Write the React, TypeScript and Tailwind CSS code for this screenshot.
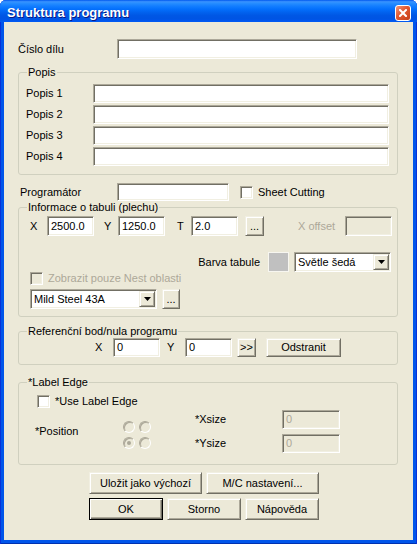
const sunken =
  "border border-t-[#aca899] border-l-[#aca899] border-b-white border-r-white shadow-[inset_1px_1px_#716f64,inset_-1px_-1px_#f1efe2]";
const raised =
  "border border-t-[#f1efe2] border-l-[#f1efe2] border-b-[#716f64] border-r-[#716f64] shadow-[inset_1px_1px_#fff,inset_-1px_-1px_#aca899] bg-[#ece9d8]";

function Field({ className = "", value = "", disabled = false }: { className?: string; value?: string; disabled?: boolean }) {
  return (
    <div
      className={`${sunken} ${disabled ? "bg-[#ece9d8] text-[#aca899]" : "bg-white"} flex shrink-0 items-center pl-[3px] whitespace-nowrap ${className}`}
    >
      {value}
    </div>
  );
}

function Button({ className = "", children, primary = false }: { className?: string; children?: React.ReactNode; primary?: boolean }) {
  if (primary) {
    return (
      <div
        className={`flex shrink-0 items-center justify-center border border-black bg-[#ece9d8] shadow-[inset_1px_1px_#fff,inset_-1px_-1px_#716f64,inset_-2px_-2px_#aca899] ${className}`}
      >
        {children}
      </div>
    );
  }
  return <div className={`${raised} flex shrink-0 items-center justify-center whitespace-nowrap ${className}`}>{children}</div>;
}

function Combo({ className = "", value }: { className?: string; value: string }) {
  return (
    <div className={`${sunken} flex shrink-0 items-center bg-white p-[1px] ${className}`}>
      <span className="flex-1 pl-[2px] whitespace-nowrap">{value}</span>
      <div className={`${raised} flex h-full w-[16px] items-center justify-center`}>
        <svg width="7" height="4" viewBox="0 0 7 4">
          <path d="M0 0h7L3.5 4z" fill="#000" />
        </svg>
      </div>
    </div>
  );
}

function Check({ disabled = false }: { disabled?: boolean }) {
  return <div className={`${sunken} h-[13px] w-[13px] shrink-0 ${disabled ? "bg-[#ece9d8]" : "bg-white"}`} />;
}

function Radio({ checked = false }: { checked?: boolean }) {
  return (
    <div className="flex h-[12px] w-[12px] items-center justify-center rounded-full border border-t-[#aca899] border-l-[#aca899] border-b-white border-r-white bg-[#ece9d8] shadow-[inset_1px_1px_#aca899]">
      {checked && <div className="h-[4px] w-[4px] rounded-full bg-[#aca899]" />}
    </div>
  );
}

function Group({ title, className = "", children }: { title: string; className?: string; children?: React.ReactNode }) {
  return (
    <fieldset className={`w-[380px] rounded-[3px] border border-[#d0d0bf] ${className}`}>
      <legend className="ml-[8px] px-[1px] leading-[13px]">{title}</legend>
      {children}
    </fieldset>
  );
}

export default function App() {
  return (
    <div className="flex h-[544px] w-[417px] flex-col overflow-hidden rounded-t-[6px] bg-[#0055ea] font-['Liberation_Sans',Arial,sans-serif] text-[11px] text-black shadow-[inset_1px_0_#0831d9,inset_-1px_0_#0831d9,inset_0_-1px_#0031b0]">
      {/* title bar */}
      <div className="flex h-[22px] shrink-0 items-center justify-between bg-[linear-gradient(to_bottom,#0058ee_0%,#3a93ff_8%,#288eff_14%,#127dff_28%,#036ffc_42%,#0262ee_56%,#0057e5_70%,#0054e3_85%,#0055eb_92%,#005bf5_100%)] pl-[7px] pr-[6px]">
        <span className="mt-[3px] text-[13px] font-bold text-white [text-shadow:1px_1px_#0a1883]">Struktura programu</span>
        <div className="mt-[3px] flex h-[16px] w-[16px] items-center justify-center rounded-[3px] border border-white bg-[linear-gradient(135deg,#f0967a_0%,#e1572f_45%,#c53f19_100%)]">
          <svg width="8" height="8" viewBox="0 0 8 8">
            <path d="M1 1l6 6M7 1L1 7" stroke="#fff" strokeWidth="2" strokeLinecap="square" />
          </svg>
        </div>
      </div>

      {/* client */}
      <div className="mx-[4px] mb-[4px] flex flex-1 flex-col bg-[#ece9d8] pl-[14px]">
        <div className="mt-[17px] flex h-[20px] items-center">
          <span className="w-[99px]">Číslo dílu</span>
          <Field className="h-[20px] w-[240px]" />
        </div>

        <Group title="Popis" className="mt-[7px] pb-[8px] pt-[5px]">
          <div className="flex flex-col gap-[2px] pl-[7px]">
            {["Popis 1", "Popis 2", "Popis 3", "Popis 4"].map((p) => (
              <div key={p} className="flex h-[19px] items-center">
                <span className="w-[67px]">{p}</span>
                <Field className="h-[19px] w-[296px]" />
              </div>
            ))}
          </div>
        </Group>

        <div className="mt-[8px] flex h-[18px] items-center">
          <span className="ml-[2px] w-[97px]">Programátor</span>
          <Field className="h-[18px] w-[112px]" />
          <div className="ml-[11px]">
            <Check />
          </div>
          <span className="ml-[5px]">Sheet Cutting</span>
        </div>

        <Group title="Informace o tabuli (plechu)" className="pb-[7px] pt-[2px]">
          <div className="flex h-[20px] items-center">
            <span className="ml-[11px] w-[17px]">X</span>
            <Field className="h-[20px] w-[47px]" value="2500.0" />
            <span className="w-[24px] pl-[10px]">Y</span>
            <Field className="h-[20px] w-[47px]" value="1250.0" />
            <span className="w-[26px] pl-[12px]">T</span>
            <Field className="h-[20px] w-[47px]" value="2.0" />
            <Button className="ml-[7px] h-[20px] w-[19px]">...</Button>
            <span className="w-[81px] pl-[34px] whitespace-nowrap text-[#aca899]">X offset</span>
            <Field className="h-[20px] w-[47px]" disabled />
          </div>
          <div className="mt-[16px] flex h-[20px] items-center justify-end pr-[6px]">
            <span>Barva tabule</span>
            <div className="ml-[8px] h-[20px] w-[21px] border border-[#f7f6f0] bg-[#c0c0c0]" />
            <Combo className="ml-[5px] h-[20px] w-[97px]" value="Světle šedá" />
          </div>
          <div className="flex h-[13px] items-center">
            <div className="ml-[11px]">
              <Check disabled />
            </div>
            <span className="ml-[5px] text-[#aca899]">Zobrazit pouze Nest oblasti</span>
          </div>
          <div className="mt-[4px] flex h-[20px] items-center">
            <Combo className="ml-[11px] h-[20px] w-[127px]" value="Mild Steel 43A" />
            <Button className="ml-[5px] h-[20px] w-[18px]">...</Button>
          </div>
        </Group>

        <Group title="Referenční bod/nula programu" className="mt-[8px] pb-[7px]">
          <div className="flex h-[19px] items-center">
            <span className="ml-[76px] w-[18px]">X</span>
            <Field className="h-[19px] w-[47px]" value="0" />
            <span className="w-[25px] pl-[7px]">Y</span>
            <Field className="h-[19px] w-[47px]" value="0" />
            <Button className="ml-[5px] h-[19px] w-[19px]">&gt;&gt;</Button>
            <Button className="ml-[10px] h-[19px] w-[75px]">Odstranit</Button>
          </div>
        </Group>

        <Group title="*Label Edge" className="mt-[11px] pb-[11px] pt-[6px]">
          <div className="flex h-[13px] items-center">
            <div className="ml-[18px]">
              <Check />
            </div>
            <span className="ml-[5px]">*Use Label Edge</span>
          </div>
          <div className="mt-[2px] flex h-[43px]">
            <span className="ml-[16px] w-[88px] self-center">*Position</span>
            <div className="mt-[11px] grid grid-cols-2 gap-[4px] self-start">
              <Radio />
              <Radio />
              <Radio checked />
              <Radio />
            </div>
            <div className="ml-[44px] flex flex-col gap-[5px]">
              <div className="flex h-[19px] items-center">
                <span className="w-[87px]">*Xsize</span>
                <Field className="h-[19px] w-[58px]" value="0" disabled />
              </div>
              <div className="flex h-[19px] items-center">
                <span className="w-[87px]">*Ysize</span>
                <Field className="h-[19px] w-[58px]" value="0" disabled />
              </div>
            </div>
          </div>
        </Group>

        <div className="ml-[71px] mt-[7px] flex gap-[4px]">
          <Button className="h-[22px] w-[113px]">Uložit jako výchozí</Button>
          <Button className="h-[22px] w-[113px]">M/C nastavení...</Button>
        </div>
        <div className="ml-[71px] mt-[4px] flex gap-[4px]">
          <Button primary className="h-[22px] w-[74px]">
            OK
          </Button>
          <Button className="h-[22px] w-[74px]">Storno</Button>
          <Button className="h-[22px] w-[74px]">Nápověda</Button>
        </div>
      </div>
    </div>
  );
}
